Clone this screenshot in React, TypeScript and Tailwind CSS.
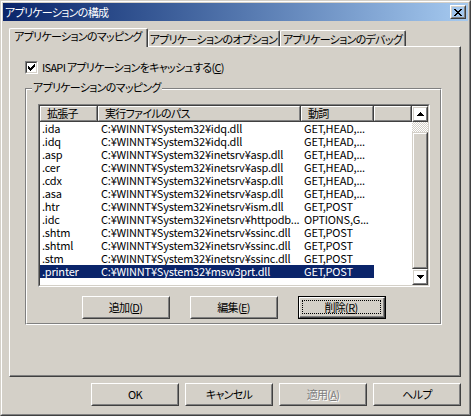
import React from "react";

const rows: [string, string, string][] = [
  [".ida", "C:¥WINNT¥System32¥idq.dll", "GET,HEAD,..."],
  [".idq", "C:¥WINNT¥System32¥idq.dll", "GET,HEAD,..."],
  [".asp", "C:¥WINNT¥System32¥inetsrv¥asp.dll", "GET,HEAD,..."],
  [".cer", "C:¥WINNT¥System32¥inetsrv¥asp.dll", "GET,HEAD,..."],
  [".cdx", "C:¥WINNT¥System32¥inetsrv¥asp.dll", "GET,HEAD,..."],
  [".asa", "C:¥WINNT¥System32¥inetsrv¥asp.dll", "GET,HEAD,..."],
  [".htr", "C:¥WINNT¥System32¥inetsrv¥ism.dll", "GET,POST"],
  [".idc", "C:¥WINNT¥System32¥inetsrv¥httpodb...", "OPTIONS,G..."],
  [".shtm", "C:¥WINNT¥System32¥inetsrv¥ssinc.dll", "GET,POST"],
  [".shtml", "C:¥WINNT¥System32¥inetsrv¥ssinc.dll", "GET,POST"],
  [".stm", "C:¥WINNT¥System32¥inetsrv¥ssinc.dll", "GET,POST"],
  [".printer", "C:¥WINNT¥System32¥msw3prt.dll", "GET,POST"],
];

function Raised({ className, children }: { className?: string; children?: React.ReactNode }) {
  return (
    <div className={"border border-t-white border-l-white border-r-[#404040] border-b-[#404040] " + (className ?? "")}>
      <div className="w-full h-full border border-t-[#d4d0c8] border-l-[#d4d0c8] border-r-[#808080] border-b-[#808080] flex items-center justify-center">
        {children}
      </div>
    </div>
  );
}

function CloseGlyph() {
  const px: [number, number, number][] = [
    [0, 0, 2], [6, 0, 2],
    [1, 1, 2], [5, 1, 2],
    [2, 2, 4],
    [3, 3, 2],
    [2, 4, 4],
    [1, 5, 2], [5, 5, 2],
    [0, 6, 2], [6, 6, 2],
  ];
  return (
    <svg width="8" height="7" viewBox="0 0 8 7" shapeRendering="crispEdges">
      {px.map(([x, y, w], i) => (
        <rect key={i} x={x} y={y} width={w} height={1} fill="#000" />
      ))}
    </svg>
  );
}

function Arrow({ down }: { down?: boolean }) {
  const rowsA = [
    [3, 1],
    [2, 3],
    [1, 5],
    [0, 7],
  ];
  const r = down ? [...rowsA].reverse() : rowsA;
  return (
    <svg width="7" height="4" viewBox="0 0 7 4" shapeRendering="crispEdges">
      {r.map(([x, w], i) => (
        <rect key={i} x={x} y={i} width={w} height={1} fill="#000" />
      ))}
    </svg>
  );
}

function CheckGlyph() {
  const px: [number, number, number][] = [
    [6, 0, 1],
    [5, 1, 2],
    [0, 2, 1], [4, 2, 3],
    [0, 3, 2], [3, 3, 3],
    [0, 4, 5],
    [1, 5, 3],
    [2, 6, 1],
  ];
  return (
    <svg width="7" height="7" viewBox="0 0 7 7" shapeRendering="crispEdges">
      {px.map(([x, y, w], i) => (
        <rect key={i} x={x} y={y} width={w} height={1} fill="#000" />
      ))}
    </svg>
  );
}

function HeaderCell({ w, children, grow }: { w?: string; children?: React.ReactNode; grow?: boolean }) {
  return (
    <div className={"h-full border-r border-b border-r-[#404040] border-b-[#404040] " + (grow ? "flex-1" : w ?? "")}>
      <div className="h-full border-t border-l border-t-white border-l-white border-r border-b border-r-[#808080] border-b-[#808080] pl-[6px] flex items-center whitespace-nowrap">
        {children}
      </div>
    </div>
  );
}

function Tab({ w, h, children, active }: { w: string; h: string; children: React.ReactNode; active?: boolean }) {
  return (
    <div
      className={
        "border-t border-l border-t-white border-l-white border-r border-r-[#404040] rounded-tl-[2px] rounded-tr-[2px] " +
        w + " " + h + " " + (active ? "-mb-px bg-[#d4d0c8]" : "")
      }
    >
      <div className="h-full border-r border-r-[#808080] flex justify-center pt-px whitespace-nowrap">
        {children}
      </div>
    </div>
  );
}

export default function App() {
  return (
    <div className="w-[471px] h-[416px] bg-[#d4d0c8] font-['Noto_Sans_CJK_JP',sans-serif] text-[11px] leading-[13px] tracking-[-0.7px] text-black [font-feature-settings:'palt'] select-none overflow-hidden">
      <div className="h-full border border-t-[#d4d0c8] border-l-[#d4d0c8] border-r-[#404040] border-b-[#404040]">
        <div className="h-full border border-t-white border-l-white border-r-[#808080] border-b-[#808080] p-px flex flex-col">
          {/* Title bar */}
          <div className="h-[18px] shrink-0 bg-linear-to-r from-[#0a246a] to-[#a6caf0] flex items-center pl-[2px] pr-[2px]">
            <span className="flex-1 text-white">アプリケーションの構成</span>
            <Raised className="w-[16px] h-[14px]">
              <CloseGlyph />
            </Raised>
          </div>

          {/* Body */}
          <div className="flex-1 flex flex-col pl-[6px] pr-[7px] pt-[7px]">
            {/* Tabs */}
            <div className="h-[18px] flex items-end relative z-10">
              <Tab w="w-[139px]" h="h-[19px]" active>
                アプリケーションのマッピング
              </Tab>
              <Tab w="w-[132px]" h="h-[16px]">
                <span className="pt-px">アプリケーションのオプション</span>
              </Tab>
              <Tab w="w-[126px]" h="h-[16px]">
                <span className="pt-px">アプリケーションのデバッグ</span>
              </Tab>
            </div>

            {/* Panel */}
            <div className="h-[331px] border border-t-white border-l-white border-r-[#404040] border-b-[#404040]">
              <div className="h-full border-r border-b border-r-[#808080] border-b-[#808080] pl-[15px] pt-[14px] flex flex-col">
                {/* Checkbox row */}
                <div className="h-[13px] flex items-center gap-[4px]">
                  <div className="w-[13px] h-[13px] border border-t-[#808080] border-l-[#808080] border-r-white border-b-white">
                    <div className="w-full h-full border border-t-[#404040] border-l-[#404040] border-r-[#d4d0c8] border-b-[#d4d0c8] bg-white flex items-center justify-center">
                      <CheckGlyph />
                    </div>
                  </div>
                  <span className="whitespace-nowrap">
                    ISAPI アプリケーションをキャッシュする(<u>C</u>)
                  </span>
                </div>

                {/* Group box */}
                <div className="mt-[14px] w-[417px] h-[237px] relative border border-t-[#808080] border-l-[#808080] border-r-white border-b-white">
                  <div className="h-full border border-t-white border-l-white border-r-[#808080] border-b-[#808080] flex flex-col">
                    {/* List view */}
                    <div className="ml-[11px] mt-[14px] w-[392px] h-[183px] border border-t-[#808080] border-l-[#808080] border-r-white border-b-white">
                      <div className="w-full h-full border border-t-[#404040] border-l-[#404040] border-r-[#d4d0c8] border-b-[#d4d0c8] bg-white flex">
                        <div className="flex-1 flex flex-col">
                          {/* Header */}
                          <div className="h-[16px] shrink-0 flex bg-[#d4d0c8]">
                            <HeaderCell w="w-[58px]">拡張子</HeaderCell>
                            <HeaderCell w="w-[203px]">実行ファイルのパス</HeaderCell>
                            <HeaderCell w="w-[73px]">動詞</HeaderCell>
                            <HeaderCell grow />
                          </div>
                          {/* Rows */}
                          <div className="flex flex-col tracking-[-0.2px]">
                            {rows.map((r, i) => {
                              const sel = i === rows.length - 1;
                              return (
                                <div
                                  key={i}
                                  className={"h-[13px] w-[334px] flex whitespace-nowrap " + (sel ? "bg-[#0a246a] text-white" : "")}
                                >
                                  <div className="w-[58px] pl-[2px]">{r[0]}</div>
                                  <div className="w-[203px] pl-[3px]">{r[1]}</div>
                                  <div className="w-[73px] pl-[3px]">{r[2]}</div>
                                </div>
                              );
                            })}
                          </div>
                        </div>
                        {/* Scrollbar */}
                        <div className="w-[16px] flex flex-col">
                          <Raised className="w-[16px] h-[16px] shrink-0">
                            <Arrow />
                          </Raised>
                          <div className="flex-1 flex flex-col [background-image:repeating-conic-gradient(#d4d0c8_0%_25%,#ffffff_0%_50%)] [background-size:2px_2px]">
                            <div className="h-[10px]" />
                            <div className="flex-1 border border-t-[#d4d0c8] border-l-[#d4d0c8] border-r-[#404040] border-b-[#404040]">
                              <div className="w-full h-full border border-t-white border-l-white border-r-[#808080] border-b-[#808080] bg-[#d4d0c8]" />
                            </div>
                          </div>
                          <Raised className="w-[16px] h-[16px] shrink-0">
                            <Arrow down />
                          </Raised>
                        </div>
                      </div>
                    </div>

                    {/* Group buttons */}
                    <div className="mt-[9px] flex justify-center gap-[20px]">
                      <Raised className="w-[88px] h-[23px]">
                        <span>追加(<u>D</u>)</span>
                      </Raised>
                      <Raised className="w-[88px] h-[23px]">
                        <span>編集(<u>E</u>)</span>
                      </Raised>
                      <div className="w-[88px] h-[23px] border border-black">
                        <div className="w-full h-full border border-t-white border-l-white border-r-[#404040] border-b-[#404040]">
                          <div className="w-full h-full border-r border-b border-r-[#808080] border-b-[#808080] p-[2px]">
                            <div className="w-full h-full border border-dotted border-black flex items-center justify-center">
                              <span>削除(<u>R</u>)</span>
                            </div>
                          </div>
                        </div>
                      </div>
                    </div>
                  </div>
                  {/* Group label */}
                  <div className="absolute left-[6px] top-[-8px] bg-[#d4d0c8] px-px whitespace-nowrap">
                    アプリケーションのマッピング
                  </div>
                </div>
              </div>
            </div>

            {/* Dialog buttons */}
            <div className="mt-[6px] flex justify-end gap-[6px]">
              <Raised className="w-[88px] h-[23px]">
                <span>OK</span>
              </Raised>
              <Raised className="w-[88px] h-[23px]">
                <span>キャンセル</span>
              </Raised>
              <Raised className="w-[88px] h-[23px]">
                <span className="text-[#808080] [text-shadow:1px_1px_0_#ffffff]">
                  適用(<u>A</u>)
                </span>
              </Raised>
              <Raised className="w-[88px] h-[23px]">
                <span>ヘルプ</span>
              </Raised>
            </div>
          </div>
        </div>
      </div>
    </div>
  );
}
